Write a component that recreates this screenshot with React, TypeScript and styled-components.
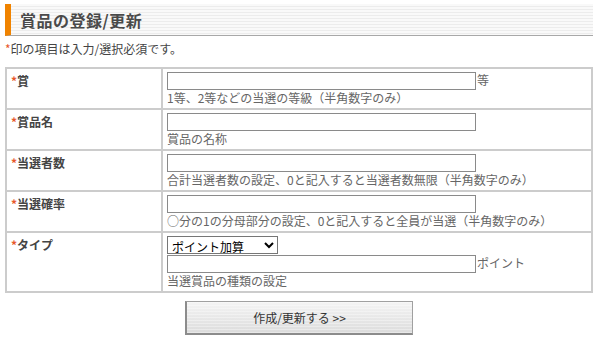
import React from "react";
import styled, { createGlobalStyle } from "styled-components";

const Global = createGlobalStyle`
  body {
    margin: 0;
    background: #fff;
    font-family: "Noto Sans CJK JP", "Liberation Sans", sans-serif;
    font-size: 12px;
    color: #333;
  }
`;

const Page = styled.div({ padding: "4px 8px 0 5px", width: 588 });

const Heading = styled.h2({
  margin: 0,
  height: 32,
  boxSizing: "border-box",
  display: "flex",
  alignItems: "center",
  paddingLeft: 9,
  borderLeft: "6px solid #f08300",
  borderBottom: "1px solid #a8a8a8",
  background:
    "repeating-linear-gradient(180deg, #f9f9f9 0px, #f9f9f9 2px, #ececec 2px, #ececec 3px)",
  fontSize: 16,
  fontWeight: "bold",
  color: "#4a4a4a",
  letterSpacing: 0.5,
});

const Note = styled.p({ margin: "5px 0 0", lineHeight: "16px", color: "#444" });
const Star = styled.span({ color: "#e8572a" });

const Table = styled.table({
  marginTop: 10,
  width: 588,
  borderCollapse: "separate",
  borderSpacing: 0,
  border: "1px solid #cccccc",
});

const Head = styled.th({
  width: 146,
  padding: "4px 4px 0",
  textAlign: "left",
  verticalAlign: "top",
  fontWeight: "bold",
  color: "#444",
  lineHeight: "15px",
  border: "1px solid #cccccc",
});

const Cell = styled.td({
  padding: "3px 4px 2px",
  verticalAlign: "top",
  border: "1px solid #cccccc",
  lineHeight: "16px",
});

const Line = styled.div({ display: "flex", alignItems: "flex-start", gap: 1 });

const TextInput = styled.input({
  width: 309,
  height: 18,
  boxSizing: "border-box",
  margin: 0,
  border: "1px solid #8a8a8a",
  padding: "0 2px",
  fontSize: 12,
});

const Select = styled.select({
  width: 111,
  height: 18,
  boxSizing: "border-box",
  margin: 0,
  padding: 0,
  border: "1px solid #767676",
  borderRadius: 0,
  fontSize: 12,
  fontFamily: "inherit",
  color: "#000",
  background: "#fff",
});

const Unit = styled.span({ color: "#666", lineHeight: "16px" });
const Hint = styled.div({ color: "#666", lineHeight: "16px" });

const Actions = styled.div({ display: "flex", justifyContent: "center", paddingTop: 8 });

const Submit = styled.button({
  width: 228,
  height: 34,
  border: "1px solid #a0a0a0",
  borderLeft: "2px solid #8c8c8c",
  borderBottom: "2px solid #8c8c8c",
  background:
    "repeating-linear-gradient(180deg, rgba(255,255,255,0.35) 0px, rgba(255,255,255,0.35) 1px, transparent 1px, transparent 3px), linear-gradient(#f4f4f4, #dcdcdc)",
  fontFamily: "inherit",
  fontSize: 12,
  color: "#333",
  cursor: "pointer",
});

interface RowProps {
  label: string;
  hint: string;
  unit?: string;
}

const Row = ({ label, hint, unit }: RowProps) => (
  <tr>
    <Head>
      <Star>*</Star>
      {label}
    </Head>
    <Cell>
      <Line>
        <TextInput type="text" />
        {unit && <Unit>{unit}</Unit>}
      </Line>
      <Hint>{hint}</Hint>
    </Cell>
  </tr>
);

const App = () => (
  <Page>
    <Global />
    <Heading>賞品の登録/更新</Heading>
    <Note>
      <Star>*</Star>印の項目は入力/選択必須です。
    </Note>
    <Table>
      <tbody>
        <Row label="賞" unit="等" hint="1等、2等などの当選の等級（半角数字のみ）" />
        <Row label="賞品名" hint="賞品の名称" />
        <Row
          label="当選者数"
          hint="合計当選者数の設定、0と記入すると当選者数無限（半角数字のみ）"
        />
        <Row
          label="当選確率"
          hint="○分の1の分母部分の設定、0と記入すると全員が当選（半角数字のみ）"
        />
        <tr>
          <Head>
            <Star>*</Star>タイプ
          </Head>
          <Cell>
            <Select defaultValue="point">
              <option value="point">ポイント加算</option>
              <option value="item">商品</option>
            </Select>
            <Line>
              <TextInput type="text" />
              <Unit>ポイント</Unit>
            </Line>
            <Hint>当選賞品の種類の設定</Hint>
          </Cell>
        </tr>
      </tbody>
    </Table>
    <Actions>
      <Submit type="button">作成/更新する &gt;&gt;</Submit>
    </Actions>
  </Page>
);

export default App;
